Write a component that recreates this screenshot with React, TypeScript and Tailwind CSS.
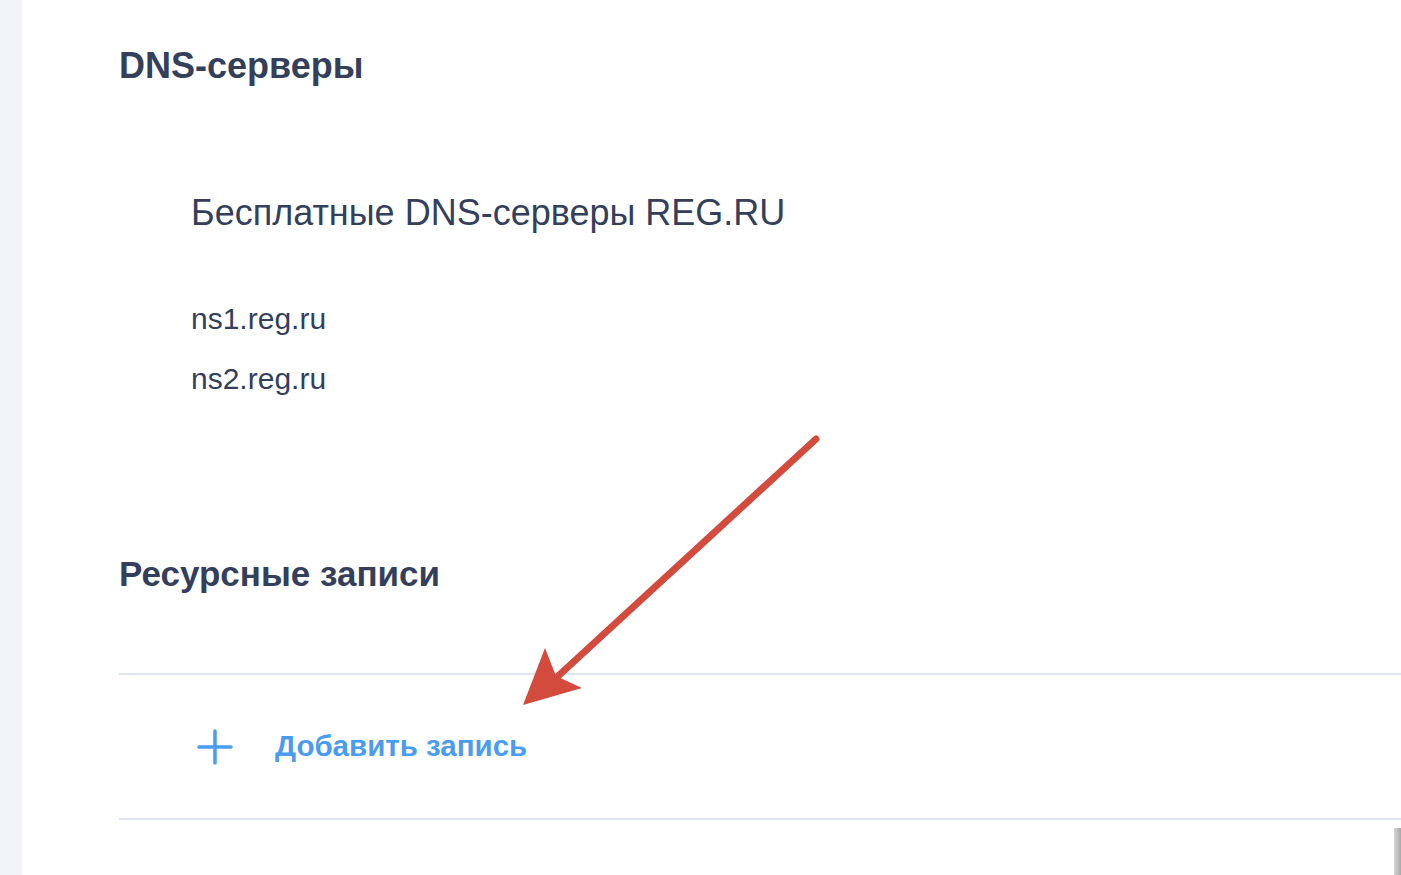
import React from 'react';

const font = { fontFamily: '"Liberation Sans", Arial, sans-serif' };

function Arrow() {
  return (
    <svg
      className="absolute left-0 top-0 pointer-events-none"
      width="1401"
      height="875"
      viewBox="0 0 1401 875"
    >
      <line x1="816" y1="439" x2="556" y2="678" stroke="#d24b3d" strokeWidth="7" strokeLinecap="round" />
      <polygon points="523,705 545,648 556,676 582,688" fill="#d24b3d" />
    </svg>
  );
}

export default function App() {
  return (
    <div className="relative w-[1401px] h-[875px] overflow-hidden bg-white flex" style={font}>
      {/* левая полоса */}
      <div className="w-[22px] shrink-0 bg-[#f1f4f8]" />

      <div className="flex-1 pl-[97px] pt-[44px] text-[#343f5c]">
        <h2 className="text-[36px] leading-[44px] font-bold">DNS-серверы</h2>

        <div className="pl-[72px] pt-[103px]">
          <div className="text-[36px] leading-[44px]">Бесплатные DNS-серверы REG.RU</div>
          <div className="pt-[64px] flex flex-col gap-[20px] text-[30px] leading-[40px]">
            <div>ns1.reg.ru</div>
            <div>ns2.reg.ru</div>
          </div>
        </div>

        <h2 className="mt-[153px] text-[35px] leading-[44px] font-bold">Ресурсные записи</h2>

        <div className="mt-[77px] border-t-2 border-b-2 border-[#dfe5ee] h-[147px] flex items-center pl-[78px] gap-[42px]">
          <svg width="36" height="36" viewBox="0 0 36 36">
            <path d="M18 2v32M2 18h32" stroke="#4a9cf0" strokeWidth="3.5" strokeLinecap="round" />
          </svg>
          <span className="text-[29.5px] font-bold text-[#4a9cf0]">Добавить запись</span>
        </div>
      </div>

      <div className="absolute right-0 top-[828px] w-[7px] h-[47px] bg-gradient-to-r from-[#d6d6d6] to-[#a9a9a9]" />
      <Arrow />
    </div>
  );
}
